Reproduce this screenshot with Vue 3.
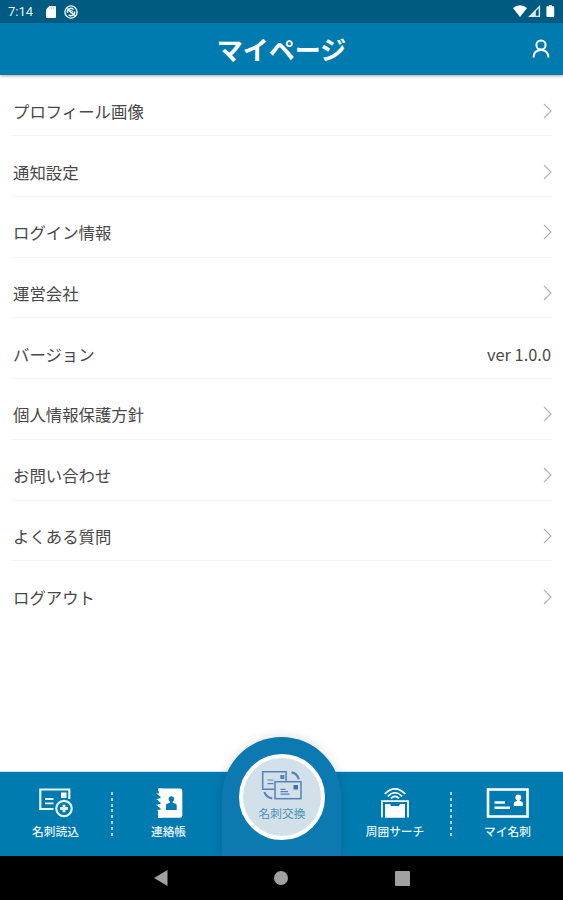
<script setup>
const rows = [
    { label: 'プロフィール画像' },
    { label: '通知設定' },
    { label: 'ログイン情報' },
    { label: '運営会社' },
    { label: 'バージョン', value: 'ver 1.0.0' },
    { label: '個人情報保護方針' },
    { label: 'お問い合わせ' },
    { label: 'よくある質問' },
    { label: 'ログアウト' },
]
</script>
<template>
<div class="screen">
    <div class="status">
        <span class="time">7:14</span>
        <svg class="sd" width="10" height="12" viewBox="0 0 10 12"><path d="M3.4 0H9a1 1 0 0 1 1 1v10a1 1 0 0 1-1 1H1a1 1 0 0 1-1-1V3.4z" fill="#fff"/><path d="M3.6 1.4v1.500M5.600 1.400v1.500M7.600 1.400v1.500" stroke="#a5c4d3" stroke-width=".8"/></svg>
        <svg class="sync" width="14" height="14" viewBox="0 0 14 14" fill="none" stroke="#e8f2f7"><circle cx="7" cy="7" r="6.1" stroke-width="1.4"/><path d="M3.5 7.8A3.6 3.6 0 0 1 9.6 4.5M10.5 6.3A3.6 3.6 0 0 1 4.6 9.8M3.3 3.6l7.5 7.2" stroke-width="1.5"/><circle cx="7.2" cy="6.6" r="1.3"/></svg>
        <svg class="signals" width="43" height="13" viewBox="0 0 43 13"><path d="M0 3Q7-2.6 14 3L7 12z" fill="#fff"/><path d="M26.4 1.6v9.8H16.8z" fill="none" stroke="#dceaf1" stroke-width="1.4"/><path d="M22.8 5.5v6h-6.5z" fill="#dceaf1"/><path d="M35.8 1.2V0h3v1.2h1.4q1 0 1 1V11q0 1-1 1h-5.8q-1 0-1-1V2.2q0-1 1-1z" fill="#fff"/></svg>
    </div>
    <header class="header">
        <h1>マイページ</h1>
        <svg class="user" width="18" height="20" viewBox="0 0 18 20" fill="none" stroke="#fff" stroke-width="2"><circle cx="9" cy="6" r="4.6"/><path d="M1.6 18.6C1.6 13.5 4.5 10.9 9 10.9s7.4 2.6 7.4 7.7"/></svg>
    </header>
    <ul class="list">
        <li v-for="row in rows" :key="row.label" class="row">
            <span>{{ row.label }}</span>
            <span v-if="row.value" class="value">{{ row.value }}</span>
            <svg v-else class="chevron" width="9" height="16" viewBox="0 0 9 16"><path d="M1 1l7 7-7 7" fill="none" stroke="#b4b4b4" stroke-width="1.2"/></svg>
        </li>
    </ul>
    <nav class="tabs">
        <div class="tab dotted">
            <svg width="44" height="34" viewBox="0 0 44 34" fill="none" stroke="#e8f4fa" stroke-width="2.2">
                <path d="M19.500 23H6.300V3.500h29V13"/>
                <path d="M11 13h8.500M11 17.300h8.500" stroke-width="1.800"/>
                <rect x="27" y="6.500" width="5.500" height="5.500" fill="#fff" stroke="none"/>
                <circle cx="30" cy="22.500" r="7.700"/>
                <path d="M30 18.700v7.600M26.200 22.500h7.600" stroke-width="2.800"/>
            </svg>
            <span>名刺読込</span>
        </div>
        <div class="tab">
            <svg class="book" width="44" height="34" viewBox="0 0 44 34">
                <path d="M12 2.500H33a2.300 2.300 0 0 1 2.300 2.300v24.600a2.300 2.300 0 0 1-2.300 2.300H11V27z" fill="#fff"/>
                <path d="M11 2.500h4v29.200h-4v-3.900l3-1.200-4.500-2.400h3.500v-3l-4-2.500h4v-3.200l-4-2.500h4V10l-4-2.500h4V6l-2-1z" fill="#fff"/>
                <path d="M9.500 8.500l4 2v1.800H10zM9.500 14.200l4 2v1.800H10zM9.500 20l4 2v1.800H10z" fill="#007bb0"/>
                <circle cx="24.300" cy="13" r="2.700" fill="#007bb0"/>
                <path d="M22.900 14h2.800v2.800l3 1q1 .4 1 1.600V24H19v-4.600q0-1.200 1-1.600l2.900-1z" fill="#007bb0"/>
            </svg>
            <span>連絡帳</span>
        </div>
        <div class="exchange">
            <div class="bump"></div>
            <div class="disc">
                <svg width="44" height="34" viewBox="0 0 44 34" fill="none" stroke="#5483b6" stroke-width="1.500">
                    <path d="M14.500 21.300H2.700V3.700h23.400V13"/>
                    <path d="M7.500 12h6M7.500 15.700h6" stroke-width="1.200"/>
                    <rect x="20.300" y="7" width="4" height="4" fill="#5483b6"  stroke="none"/>
                    <rect x="15" y="13.700" width="26" height="17"/>
                    <rect x="33.500" y="17" width="4.500" height="4.500" fill="#4272ac" stroke="none"/>
                    <path d="M20.500 21.300h5M20.500 23.700h7.500M20.500 26.100h9" stroke-width="1.200"/>
                    <path d="M31.500 4.400q5.500.8 7.300 6.800M4.300 24.200q2 5.200 8 6.300" stroke-width="2.100"/>
                </svg>
                <span>名刺交換</span>
            </div>
        </div>
        <div class="tab dotted">
            <svg width="44" height="34" viewBox="0 0 44 34" fill="none" stroke="#fff">
                <path d="M11.700 8q10.300-10.200 20.600 0M14.800 10.400q7.200-7.300 14.400 0M18 12.400q4-4.200 8 0" stroke-width="1.700"/>
                <path d="M9 31.500V15.200h26v16.300" stroke-width="1.700"/>
                <path d="M12 18h5l1 2h8l1-2h5v13.700H12z" fill="#fff" stroke="none"/>
            </svg>
            <span>周囲サーチ</span>
        </div>
        <div class="tab">
            <svg width="44" height="34" viewBox="0 0 44 34" fill="none" stroke="#fff">
                <rect x="2" y="3.500" width="39.500" height="27" stroke-width="2.600"/>
                <path d="M8.500 16.500H19M8.500 21.800H24" stroke-width="2.400"/>
                <circle cx="32.300" cy="11.500" r="2.900" fill="#fff" stroke="none"/>
                <path d="M31 13h2.700v2l2.200.8q.900.400.900 1.400v2.700h-9v-2.700q0-1 .9-1.400l2.300-.8z" fill="#fff" stroke="none"/>
            </svg>
            <span>マイ名刺</span>
        </div>
    </nav>
    <div class="system">
        <svg width="14" height="16" viewBox="0 0 14 16"><path d="M0 8L13.500 0v16z" fill="#a0a0a0"/></svg>
        <svg width="14" height="14" viewBox="0 0 14 14"><circle cx="7" cy="7" r="7" fill="#a0a0a0"/></svg>
        <svg width="15" height="15" viewBox="0 0 15 15"><rect width="15" height="15" rx="1" fill="#a0a0a0"/></svg>
    </div>
</div>
</template>

<style>
body {
    margin: 0;
    background: #fff;
}
</style>
<style scoped>
.screen {
    display: flex;
    flex-direction: column;
    width: 563px;
    height: 900px;
    overflow: hidden;
    background: #fff;
    color: #484848;
    font-family: "Noto Sans CJK JP", sans-serif;
}
svg {
    display: block;
    flex: none;
}
.status {
    display: flex;
    align-items: center;
    height: 23px;
    padding: 0 7px 0 8px;
    box-sizing: border-box;
    background: #005b82;
}
.time {
    width: 38px;
    color: #e8f2f7;
    font: 400 13px/23px Roboto, "Noto Sans", sans-serif;
}
.sync {
    margin-left: 8px;
}
.signals {
    margin-left: auto;
}
.header {
    display: grid;
    grid-template-columns: 1fr auto 1fr;
    align-items: center;
    height: 52px;
    flex: none;
    background: #007bb0;
    box-shadow: 0 1px 3px rgba(0, 0, 0, 0.35);
}
h1 {
    grid-column: 2;
    margin: 0;
    color: #fff;
    font-size: 26px;
    font-weight: 700;
    line-height: 52px;
}
.user {
    justify-self: end;
    margin-right: 13px;
}
.list {
    flex: 1;
    margin: 0;
    padding: 0.7px 11px 0 12px;
    list-style: none;
}
.row {
    display: flex;
    align-items: center;
    justify-content: space-between;
    height: 60.7px;
    padding: 11px 0 0 1px;
    box-sizing: border-box;
    border-bottom: 1px solid #f4f4f4;
    font-size: 16.4px;
    line-height: 24px;
}
.row:last-child {
    border-bottom: 0;
}
.value {
    margin-right: 1px;
}
.tabs {
    display: grid;
    grid-template-columns: 113px 111px 116px 112px 111px;
    flex: none;
    height: 84px;
    background: #007bb0;
    box-shadow: 0 -1px 1px rgba(0, 123, 176, 0.2);
}
.tab {
    display: flex;
    flex-direction: column;
    align-items: center;
    padding-top: 14px;
    color: #e8f4fa;
    font-size: 11.7px;
    font-weight: 500;
    line-height: 18px;
    white-space: nowrap;
}
.tab span {
    margin-top: 2px;
}
.dotted {
    padding-right: 2px;
    background: repeating-linear-gradient(#a9d2e6 0 3px, transparent 3px 5.8px) right 0 top 20px / 2px 44px no-repeat;
}
.exchange {
    position: relative;
}
/* raised centre button sits over the bar and the list */
.bump {
    position: absolute;
    left: -2px;
    top: -35px;
    width: 119px;
    height: 119px;
    border-radius: 60px 60px 0 0;
    background: #0c7ab1;
    box-shadow: 0 0 12px rgba(0, 0, 0, 0.14);
    clip-path: inset(-20px -20px 0 -20px);
}
.disc {
    position: absolute;
    left: 15px;
    top: -18px;
    display: flex;
    flex-direction: column;
    align-items: center;
    width: 86px;
    height: 86px;
    padding-top: 10px;
    box-sizing: border-box;
    border: 4.5px solid #fff;
    border-radius: 50%;
    background: #d1e0e9;
    color: #4b90b5;
    font-size: 11.7px;
    line-height: 18px;
}
.disc span {
    margin-top: 2px;
}
.system {
    display: flex;
    align-items: center;
    justify-content: space-between;
    flex: none;
    height: 44px;
    padding: 0 153.5px 0 154px;
    box-sizing: border-box;
    background: #000;
}
</style>
